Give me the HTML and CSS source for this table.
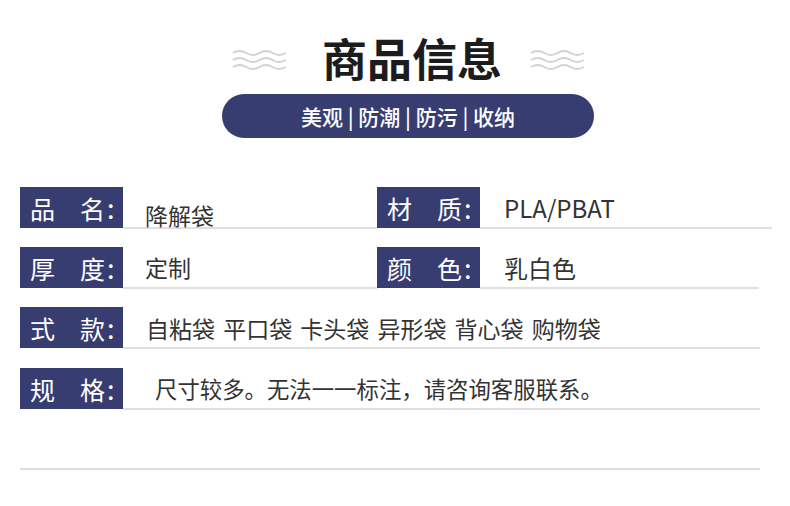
FILE: index.html
```html
<!DOCTYPE html>
<html lang="zh-CN">
<head>
<meta charset="utf-8">
<link rel="stylesheet" href="styles.css">
</head>
<body>
<div class="page">
  <header class="head">
    <div class="title-row">
      <svg class="wave" width="55" height="22" viewBox="0 0 55 22">
        <g fill="none" stroke="#d2d2d2" stroke-width="2">
          <path d="M1 4 q6.6 -4 13.2 0 t13.2 0 t13.2 0 t13.2 0"/>
          <path d="M1 11 q6.6 -4 13.2 0 t13.2 0 t13.2 0 t13.2 0"/>
          <path d="M1 18 q6.6 -4 13.2 0 t13.2 0 t13.2 0 t13.2 0"/>
        </g>
      </svg>
      <h1 class="title">商品信息</h1>
      <svg class="wave wave-r" width="55" height="22" viewBox="0 0 55 22">
        <g fill="none" stroke="#d2d2d2" stroke-width="2">
          <path d="M1 4 q6.6 -4 13.2 0 t13.2 0 t13.2 0 t13.2 0"/>
          <path d="M1 11 q6.6 -4 13.2 0 t13.2 0 t13.2 0 t13.2 0"/>
          <path d="M1 18 q6.6 -4 13.2 0 t13.2 0 t13.2 0 t13.2 0"/>
        </g>
      </svg>
    </div>
    <div class="pill">美观 | 防潮 | 防污 | 收纳</div>
  </header>

  <section class="specs">
    <div class="row row-1">
      <div class="pair pair-left">
        <div class="label">品　名<span class="colon">:</span></div>
        <div class="value value-low">降解袋</div>
      </div>
      <div class="pair pair-right">
        <div class="label">材　质<span class="colon">:</span></div>
        <div class="value value-r">PLA/PBAT</div>
      </div>
    </div>
    <div class="row row-2">
      <div class="pair pair-left">
        <div class="label">厚　度<span class="colon">:</span></div>
        <div class="value">定制</div>
      </div>
      <div class="pair pair-right">
        <div class="label">颜　色<span class="colon">:</span></div>
        <div class="value value-r">乳白色</div>
      </div>
    </div>
    <div class="row row-3">
      <div class="pair pair-full">
        <div class="label">式　款<span class="colon">:</span></div>
        <div class="value value-wide">自粘袋 平口袋 卡头袋 异形袋 背心袋 购物袋</div>
      </div>
    </div>
    <div class="row row-4">
      <div class="pair pair-full">
        <div class="label">规　格<span class="colon">:</span></div>
        <div class="value value-indent">尺寸较多。无法一一标注，请咨询客服联系。</div>
      </div>
    </div>
    <div class="end-line"></div>
  </section>
</div>
</body>
</html>
```

FILE: styles.css
```css
* { box-sizing: border-box; }
html, body {
  margin: 0;
  padding: 0;
  background: #ffffff;
}
body {
  width: 790px;
  height: 506px;
  overflow: hidden;
  font-family: "Noto Sans CJK SC", "Noto Sans", sans-serif;
}
.page {
  padding-top: 35px;
}
.head {
  margin-left: 222px;
  width: 372px;
}
.title-row {
  display: flex;
  align-items: center;
  padding-left: 10px;
  height: 46px;
}
.wave {
  display: block;
  flex: none;
  margin-top: 4px;
}
.title {
  margin: 0 28px 0 35px;
  font-size: 45px;
  line-height: 46px;
  font-weight: 700;
  color: #1c1c1c;
  white-space: nowrap;
}
.pill {
  margin-top: 13px;
  height: 44px;
  border-radius: 22px;
  background: #383d71;
  color: #ffffff;
  font-size: 21px;
  line-height: 44px;
  text-align: center;
  font-weight: 500;
  white-space: pre;
}
.specs {
  margin-top: 49px;
  padding-left: 20px;
}
.row {
  display: flex;
  height: 41px;
  margin-bottom: 19px;
}
.row-3 { margin-bottom: 20px; }
.row-4 { margin-bottom: 59px; }
.pair {
  display: flex;
  height: 41px;
}
.pair-left { width: 357px; }
.row-1 .pair-right { width: 395px; }
.row-2 .pair-right { width: 382px; }
.pair-full { width: 740px; }
.label {
  flex: none;
  width: 103px;
  height: 41px;
  background: #383d71;
  color: #ffffff;
  font-size: 25px;
  line-height: 41px;
  padding-left: 10px;
  white-space: pre;
}
.colon {
  margin-left: 2px;
  font-size: 27px;
}
.value {
  flex: 1;
  height: 42px;
  border-bottom: 2px solid #dfdfdf;
  padding-left: 22px;
  padding-top: 9px;
  font-size: 23px;
  line-height: 1;
  color: #333333;
  white-space: pre;
}
.value-low { padding-top: 17px; }
.value-r { padding-left: 24px; font-size: 24px; }
.value-wide { padding-left: 23px; padding-top: 10px; font-size: 23px; word-spacing: 3px; }
.value-indent { padding-left: 32px; padding-top: 9px; font-size: 22.4px; }
.end-line {
  width: 740px;
  height: 2px;
  background: #dfdfdf;
}
```
